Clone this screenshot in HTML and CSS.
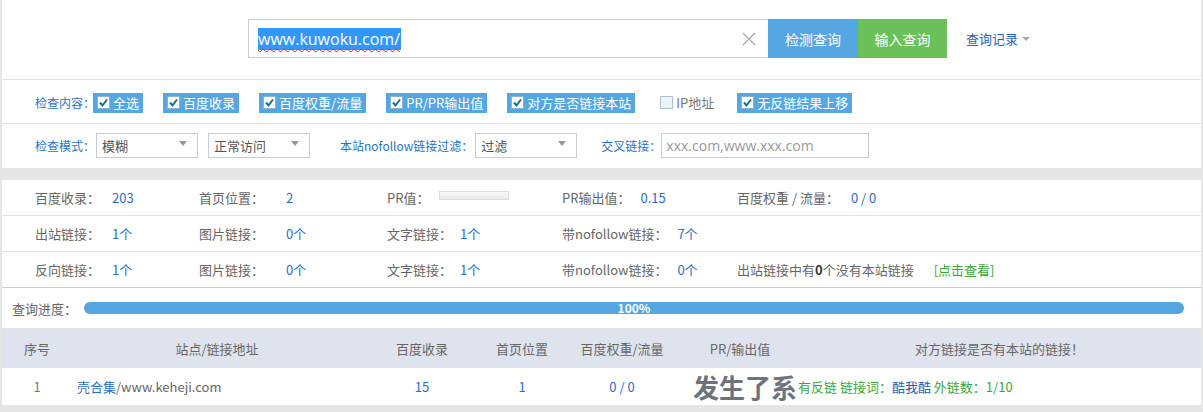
FILE: index.html
```html
<!DOCTYPE html>
<html lang="zh-CN">
<head>
<meta charset="utf-8">
<title>反链查询</title>
<link rel="stylesheet" href="styles.css">
</head>
<body>
<div class="page">
  <section class="top">
    <div class="search">
      <div class="search-input">
        <span class="url"><span class="sel">www.kuwoku.com/</span></span>
        <svg class="clear" width="14" height="14" viewBox="0 0 14 14"><path d="M1 1 L13 13 M13 1 L1 13" stroke="#a8a8a8" stroke-width="1.2" fill="none"/></svg>
      </div>
      <button class="btn btn-blue">检测查询</button>
      <button class="btn btn-green">输入查询</button>
      <a class="history">查询记录<span class="caret"></span></a>
    </div>
  </section>

  <section class="opts">
    <div class="opt-row row-check">
      <span class="lbl">检查内容：</span>
      <span class="chk on"><i class="box"><svg width="13" height="13" viewBox="0 0 13 13"><path d="M3 6.5 L5.5 9.5 L10 3.5" stroke="#1b6f85" stroke-width="2" fill="none"/></svg></i>全选</span>
      <span class="chk on"><i class="box"><svg width="13" height="13" viewBox="0 0 13 13"><path d="M3 6.5 L5.5 9.5 L10 3.5" stroke="#1b6f85" stroke-width="2" fill="none"/></svg></i>百度收录</span>
      <span class="chk on"><i class="box"><svg width="13" height="13" viewBox="0 0 13 13"><path d="M3 6.5 L5.5 9.5 L10 3.5" stroke="#1b6f85" stroke-width="2" fill="none"/></svg></i>百度权重/流量</span>
      <span class="chk on"><i class="box"><svg width="13" height="13" viewBox="0 0 13 13"><path d="M3 6.5 L5.5 9.5 L10 3.5" stroke="#1b6f85" stroke-width="2" fill="none"/></svg></i>PR/PR输出值</span>
      <span class="chk on"><i class="box"><svg width="13" height="13" viewBox="0 0 13 13"><path d="M3 6.5 L5.5 9.5 L10 3.5" stroke="#1b6f85" stroke-width="2" fill="none"/></svg></i>对方是否链接本站</span>
      <span class="chk off"><i class="box"></i>IP地址</span>
      <span class="chk on"><i class="box"><svg width="13" height="13" viewBox="0 0 13 13"><path d="M3 6.5 L5.5 9.5 L10 3.5" stroke="#1b6f85" stroke-width="2" fill="none"/></svg></i>无反链结果上移</span>
    </div>
    <div class="opt-row row-mode">
      <span class="lbl">检查模式：</span>
      <span class="select">模糊<span class="tri"></span></span>
      <span class="select sel2">正常访问<span class="tri"></span></span>
      <span class="lbl lbl-nf">本站nofollow链接过滤：</span>
      <span class="select">过滤<span class="tri"></span></span>
      <span class="lbl lbl-cross">交叉链接：</span>
      <span class="text-input">xxx.com,www.xxx.com</span>
    </div>
  </section>

  <section class="stats">
    <div class="stat-row">
      <span class="stat c1"><span class="k">百度收录：</span><span class="v">203</span></span>
      <span class="stat c2"><span class="k">首页位置：</span><span class="v">2</span></span>
      <span class="stat c3"><span class="k">PR值：</span><span class="prbar"></span></span>
      <span class="stat c4"><span class="k">PR输出值：</span><span class="v">0.15</span></span>
      <span class="stat c5"><span class="k">百度权重 / 流量：</span><span class="v">0 / 0</span></span>
    </div>
    <div class="stat-row">
      <span class="stat c1"><span class="k">出站链接：</span><span class="v">1个</span></span>
      <span class="stat c2"><span class="k">图片链接：</span><span class="v">0个</span></span>
      <span class="stat c3"><span class="k">文字链接：</span><span class="v">1个</span></span>
      <span class="stat c4"><span class="k">带nofollow链接：</span><span class="v">7个</span></span>
    </div>
    <div class="stat-row last">
      <span class="stat c1"><span class="k">反向链接：</span><span class="v">1个</span></span>
      <span class="stat c2"><span class="k">图片链接：</span><span class="v">0个</span></span>
      <span class="stat c3"><span class="k">文字链接：</span><span class="v">1个</span></span>
      <span class="stat c4"><span class="k">带nofollow链接：</span><span class="v">0个</span></span>
      <span class="stat c5"><span class="k">出站链接中有<b>0</b>个没有本站链接</span><a class="view">[点击查看]</a></span>
    </div>
  </section>

  <section class="progress">
    <span class="plbl">查询进度：</span>
    <div class="track"><div class="fill" style="width:100%">100%</div></div>
  </section>

  <table class="result">
    <colgroup>
      <col class="w1"><col class="w2"><col class="w3"><col class="w4"><col class="w5"><col class="w6"><col class="w7">
    </colgroup>
    <thead>
      <tr><th>序号</th><th>站点/链接地址</th><th>百度收录</th><th>首页位置</th><th>百度权重/流量</th><th>PR/输出值</th><th>对方链接是否有本站的链接！</th></tr>
    </thead>
    <tbody>
      <tr>
        <td class="idx">1</td>
        <td class="site"><a class="sname">壳合集</a>/www.keheji.com</td>
        <td class="num">15</td>
        <td class="num">1</td>
        <td class="num">0 / 0</td>
        <td class="pr"><span class="err">发生了系</span></td>
        <td class="linkres">有反链 链接词：<span class="kw">酷我酷</span> 外链数：1/10</td>
      </tr>
    </tbody>
  </table>
</div>
</body>
</html>
```

FILE: styles.css
```css
* { box-sizing: border-box; }
html, body { margin: 0; padding: 0; }
body {
  background: #e6e6e6;
  font-family: "Noto Sans CJK SC", "Noto Sans", sans-serif;
  font-size: 13px;
  color: #666;
  height: 412px;
  overflow: hidden;
}
.page { margin: 0 2px; }

/* top search */
.top {
  background: #fff;
  height: 80px;
  border-bottom: 1px solid #e3e3e3;
  padding: 19px 0 0 246px;
}
.search { display: flex; align-items: center; height: 39px; }
.search-input {
  width: 520px;
  height: 39px;
  border: 1px solid #c7ccd9;
  border-right: none;
  display: flex;
  align-items: center;
  padding-left: 9px;
}
.url { flex: 1; font-family: "Open Sans", "Noto Sans", sans-serif; font-size: 16px; line-height: 22px; }
.sel {
  background: #3297fd;
  color: #fff;
  text-decoration: underline wavy #e02020;
  text-decoration-thickness: 1px;
  text-underline-offset: 3px;
  display: inline-block;
  height: 22px;
  padding-right: 1px;
}
.clear { margin-right: 12px; }
.btn {
  border: none;
  height: 39px;
  width: 90px;
  color: #fff;
  font-family: inherit;
  font-size: 14px;
  padding: 0;
}
.btn-blue { background: #55a7e2; }
.btn-green { background: #6cc05a; width: 89px; }
.history {
  margin-left: 19px;
  color: #1f62b5;
  font-size: 13px;
  display: flex;
  align-items: center;
}
.caret {
  display: inline-block;
  margin-left: 4px;
  border-left: 4px solid transparent;
  border-right: 4px solid transparent;
  border-top: 4px solid #aaa;
}

/* options */
.opts { background: #fff; }
.opt-row {
  display: flex;
  align-items: center;
  padding-left: 33px;
}
.row-check { height: 44px; border-bottom: 1px solid #e3e3e3; padding-top: 2px; }
.row-mode { height: 44px; padding-bottom: 2px; }
.lbl { color: #2c73c4; font-size: 12px; margin-right: 1px; }
.row-check .lbl { margin-right: -2px; }
.chk {
  display: inline-flex;
  align-items: center;
  height: 20px;
  padding: 0 4px 0 4px;
  margin-right: 20px;
  font-size: 13px;
  color: #fff;
}
.chk.on { background: #55a7e2; }
.chk.off { color: #777; padding-left: 3px; margin-left: 2px; margin-right: 19px; }
.box {
  display: inline-block;
  width: 13px;
  height: 13px;
  background: #fff;
  border: 1px solid #8fb3c8;
  margin-right: 3px;
  position: relative;
}
.box svg { position: absolute; left: -1px; top: -1px; }
.chk.off .box { background: #edf4f6; border-color: #a9c3cf; }

.select {
  width: 102px;
  height: 25px;
  border: 1px solid #c7ccd9;
  color: #555;
  padding-left: 5px;
  display: inline-flex;
  align-items: center;
  justify-content: space-between;
  padding-right: 10px;
  line-height: 1;
}
.sel2 { margin-left: 10px; }
.tri {
  border-left: 4px solid transparent;
  border-right: 4px solid transparent;
  border-top: 5px solid #999;
  margin-top: -4px;
}
.lbl-nf { margin-left: 30px; margin-right: 2px; }
.lbl-cross { margin-left: 24px; margin-right: 0; }
.text-input {
  width: 208px;
  height: 25px;
  border: 1px solid #c7ccd9;
  color: #999;
  padding-left: 4px;
  display: inline-flex;
  align-items: center;
  font-size: 14px;
  font-family: "Open Sans", "Noto Sans", sans-serif;
}

/* stats */
.stats { background: #fff; margin-top: 12px; }
.stat-row {
  display: flex;
  align-items: center;
  height: 36px;
  border-bottom: 1px solid #e3e3e3;
  padding-left: 33px;
}
.stat-row.last { border-bottom-color: #c8cddb; }
.stat { display: inline-flex; align-items: center; }
.c1 { width: 164px; }
.c2 { width: 188px; }
.c3 { width: 175px; }
.c4 { width: 175px; }
.k { color: #666; }
.v { color: #2a6dc8; margin-left: 12px; }
.c2 .v { margin-left: 22px; }
.c3 .v { margin-left: 8px; }
.c4 .v { margin-left: 10px; }
.c5 .v { margin-left: 12px; }
.k b { color: #333; }
.prbar {
  display: inline-block;
  width: 70px;
  height: 9px;
  margin-left: 10px;
  margin-top: -4px;
  border: 1px solid #ddd;
  background: linear-gradient(#fafafa, #e8e8e8);
}
.view { color: #3aa63a; margin-left: 20px; }

/* progress */
.progress {
  background: #fff;
  height: 40px;
  display: flex;
  align-items: center;
  padding-left: 10px;
  padding-right: 17px;
}
.plbl { width: 72px; }
.track {
  flex: 1;
  height: 12px;
  border-radius: 6px;
  background: #f0f0f0;
}
.fill {
  height: 12px;
  border-radius: 6px;
  background: #55a6e0;
  color: #fff;
  font-weight: bold;
  font-size: 12px;
  line-height: 12px;
  text-align: center;
}

/* table */
.result {
  width: 100%;
  border-collapse: collapse;
  table-layout: fixed;
  background: #fff;
}
.w1 { width: 70px; }
.w2 { width: 290px; }
.w3 { width: 120px; }
.w4 { width: 80px; }
.w5 { width: 120px; }
.w6 { width: 116px; }
.result th {
  background: #dfe3ee;
  height: 40px;
  font-weight: normal;
  color: #666;
  font-size: 13px;
  padding: 0;
}
.result td {
  height: 37px;
  padding: 0;
  text-align: center;
  color: #666;
  white-space: nowrap;
}
.result td.num { color: #2a6dc8; }
.result td.idx { color: #777; }
.result td.site { text-align: left; padding-left: 5px; }
.sname { color: #2a6dc8; }
.result td.pr { text-align: left; padding-left: 11px; overflow: hidden; }
.err {
  font-size: 26px;
  font-weight: bold;
  color: #6e737c;
  line-height: 30px;
  display: inline-block;
  vertical-align: middle;
}
.result td.linkres { text-align: left; color: #3aa63a; }
.kw { color: #1f62b5; }
```
